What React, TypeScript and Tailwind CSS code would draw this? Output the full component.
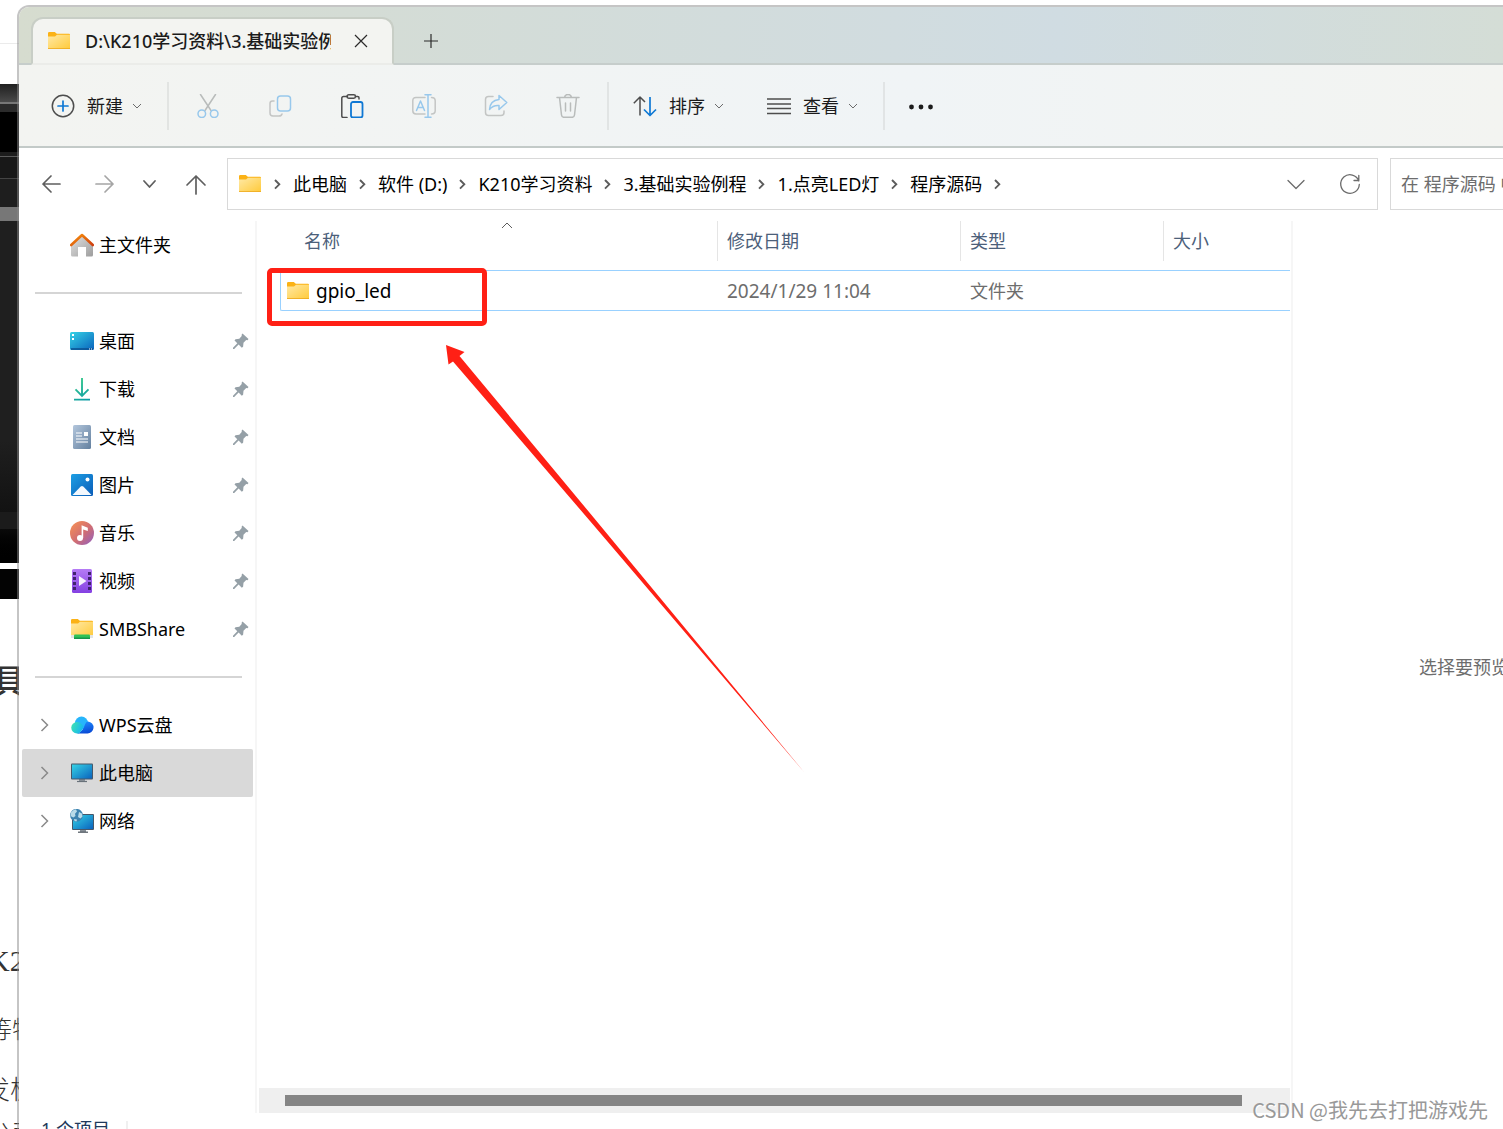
import type { ReactNode } from 'react';

interface IconProps {
  className?: string;
}

function FolderIcon({ className = 'w-6 h-6' }: IconProps) {
  return (
    <svg viewBox="0 0 24 24" className={`${className} shrink-0`}>
      <defs>
        <linearGradient id="folder-front" x1="0" y1="0" x2="1" y2="1">
          <stop offset="0" stopColor="#ffe9a6" />
          <stop offset="1" stopColor="#ffca3a" />
        </linearGradient>
      </defs>
      <path d="M1 4.2q0-1.2 1.200-1.200h5.600l2 1.800H22q1 0 1 1V9H1z" fill="#fbb216" />
      <path d="M1 7.500h7l2-1.700h13V20H1z" fill="url(#folder-front)" />
      <path d="M1 19.200h22v.8H1z" fill="#eda71c" />
    </svg>
  );
}

function HomeIcon() {
  return (
    <svg viewBox="0 0 24 24" className="w-6 h-6 shrink-0">
      <defs>
        <linearGradient id="home-wall" x1="0" y1="0" x2="1" y2="1">
          <stop offset="0" stopColor="#e3e3e3" />
          <stop offset="1" stopColor="#9d9d9d" />
        </linearGradient>
        <linearGradient id="home-roof" x1="0" y1="0" x2="1" y2="1">
          <stop offset="0" stopColor="#f9920b" />
          <stop offset="1" stopColor="#cf3f10" />
        </linearGradient>
      </defs>
      <path d="M1 11 12 2l11 9v11q0 1.500-1.500 1.500H16v-9.500H8v9.500H2.500Q1 23.500 1 22z" fill="url(#home-wall)" />
      <path d="M1.200 12 12 2l10.800 10" fill="none" stroke="url(#home-roof)" strokeWidth="2.600" strokeLinecap="round" strokeLinejoin="round" />
    </svg>
  );
}

function DesktopIcon() {
  return (
    <svg viewBox="0 0 24 24" className="w-6 h-6 shrink-0">
      <defs>
        <linearGradient id="desktop-bg" x1="0" y1="0" x2="1" y2="1">
          <stop offset="0" stopColor="#35d3e6" />
          <stop offset="1" stopColor="#0a63bd" />
        </linearGradient>
      </defs>
      <rect y="3" width="24" height="18" rx="1.500" fill="url(#desktop-bg)" />
      <path d="M1 20h22" stroke="#0b4f8f" strokeWidth="1.500" />
      <path d="M2 5h2v2H2zM2 9h2v2H2z" fill="#fff" />
      <path d="M19 19.500h1v1h-1zM21 19.500h1v1h-1z" fill="#fff" />
    </svg>
  );
}

function DownloadIcon() {
  return (
    <svg viewBox="0 0 24 24" className="w-6 h-6 shrink-0">
      <defs>
        <linearGradient id="download-stroke" gradientUnits="userSpaceOnUse" x1="4" y1="1" x2="18" y2="24">
          <stop offset="0" stopColor="#3fcf8a" />
          <stop offset="1" stopColor="#0a9aa6" />
        </linearGradient>
      </defs>
      <path d="M12 1v17.500M5.500 12.300l6.500 6.500 6.500-6.500M4 22.600h16" fill="none" stroke="url(#download-stroke)" strokeWidth="1.900" />
    </svg>
  );
}

function DocumentIcon() {
  return (
    <svg viewBox="0 0 24 24" className="w-6 h-6 shrink-0">
      <defs>
        <linearGradient id="document-bg" x1="0" y1="0" x2="1" y2="1">
          <stop offset="0" stopColor="#b3c6dc" />
          <stop offset="1" stopColor="#63809f" />
        </linearGradient>
      </defs>
      <rect x="3" width="18" height="24" rx="1.500" fill="url(#document-bg)" />
      <path d="M6 8h6M6 11h6M6 14h12M6 17h12" stroke="#fff" strokeWidth="1.200" />
      <path d="M14 7h4v4h-4z" fill="#fff" />
    </svg>
  );
}

function PictureIcon() {
  return (
    <svg viewBox="0 0 24 24" className="w-6 h-6 shrink-0">
      <defs>
        <linearGradient id="picture-bg" x1="0" y1="0" x2="1" y2="1">
          <stop offset="0" stopColor="#1d9fe4" />
          <stop offset="1" stopColor="#0a5cb8" />
        </linearGradient>
      </defs>
      <rect x="1" y="1" width="22" height="22" rx="1.500" fill="url(#picture-bg)" />
      <path d="m2.500 22 8.200-8.400q1.300-1.200 2.600 0l8.200 8.400z" fill="#f3f8fd" />
      <circle cx="17.500" cy="6.500" r="2" fill="#fff" />
    </svg>
  );
}

function MusicIcon() {
  return (
    <svg viewBox="0 0 24 24" className="w-6 h-6 shrink-0">
      <defs>
        <linearGradient id="music-bg" x1="0" y1="0" x2="1" y2="1">
          <stop offset="0.100" stopColor="#f28c58" />
          <stop offset="0.550" stopColor="#cf6d74" />
          <stop offset="1" stopColor="#8f60c4" />
        </linearGradient>
      </defs>
      <circle cx="12" cy="12" r="12" fill="url(#music-bg)" />
      <circle cx="10" cy="17" r="3" fill="#fff" />
      <path d="M11.600 17V4.200l6.200 2.500v3.400l-4.600-1.700V17z" fill="#fff" />
    </svg>
  );
}

function VideoIcon() {
  return (
    <svg viewBox="0 0 24 24" className="w-6 h-6 shrink-0">
      <defs>
        <linearGradient id="video-bg" x1="0" y1="0" x2="0" y2="1">
          <stop offset="0" stopColor="#b57bf5" />
          <stop offset="1" stopColor="#8440e2" />
        </linearGradient>
      </defs>
      <rect x="2" width="20" height="24" rx="1.500" fill="url(#video-bg)" />
      <path d="M4.500 3v19M19.500 3v19" stroke="#41236e" strokeWidth="3" strokeDasharray="3 2" />
      <path d="m9 7 7.500 5L9 17z" fill="#f5f0fc" />
    </svg>
  );
}

function ShareFolderIcon() {
  return (
    <svg viewBox="0 0 24 24" className="w-6 h-6 shrink-0">
      <path d="M1 3.200Q1 2 2.200 2h5.600l2 1.800H22q1 0 1 1V8H1z" fill="#fbb216" />
      <path d="M1 6.500h7l2-1.700h13V20H1z" fill="url(#folder-front)" />
      <path d="M1 18h22v3H1z" fill="#e2e5e4" />
      <rect x="4" y="17.500" width="16" height="4.500" rx="1" fill="#2fc257" />
      <path d="M4 20.500h16v1.500H4z" fill="#16954a" />
    </svg>
  );
}

function CloudIcon() {
  return (
    <svg viewBox="0 0 24 24" className="w-6 h-6 shrink-0">
      <defs>
        <linearGradient id="cloud-left" x1="0" y1="0.300" x2="1" y2="0.700">
          <stop offset="0" stopColor="#3de0b4" />
          <stop offset="1" stopColor="#12b4f5" />
        </linearGradient>
        <linearGradient id="cloud-right" x1="0.300" y1="0" x2="0.600" y2="1">
          <stop offset="0" stopColor="#1f8dff" />
          <stop offset="1" stopColor="#0848d4" />
        </linearGradient>
      </defs>
      <circle cx="11.500" cy="10" r="6.500" fill="#27b5fb" />
      <path d="M18 8.500a5.800 5.800 0 0 1-1 12H7q6-2 8-9 1-3 3-3z" fill="url(#cloud-right)" />
      <path d="M7 9q3.800 0 6.500 4.500-1.500 5-5 7H7A5.700 5.700 0 0 1 7 9z" fill="url(#cloud-left)" />
    </svg>
  );
}

function ComputerIcon() {
  return (
    <svg viewBox="0 0 24 24" className="w-6 h-6 shrink-0">
      <path d="M9 18h6v2.500H9z" fill="#8a9299" />
      <path d="M7 20.500h10" stroke="#69727a" strokeWidth="1.200" />
      <rect x="1" y="2.500" width="22" height="16" rx="1" fill="#46586a" />
      <path d="M2 3.500h20v14H2z" fill="url(#desktop-bg)" />
    </svg>
  );
}

function NetworkIcon() {
  return (
    <svg viewBox="0 0 24 24" className="w-6 h-6 shrink-0">
      <path d="M10 20h6v3h-6z" fill="#8a9299" />
      <path d="M8 23.200h10" stroke="#4d565e" strokeWidth="1.200" />
      <rect x="2" y="5" width="22" height="16" rx="1" fill="#46586a" />
      <path d="M3 6h20v14H3z" fill="url(#desktop-bg)" />
      <circle cx="6.500" cy="6.300" r="6.400" fill="#3d83b0" />
      <path d="M1 3.500Q3 .5 6 .3l1 2.200-2 2.300.5 2.200-2.200 1.500L.500 7zM9 3l3 1.500.5 3-2 2-2.500-1.500zM4 10l3 .5-.5 2-2-.5z" fill="#b9dbe9" />
    </svg>
  );
}

function PinIcon() {
  return (
    <svg viewBox="0 0 16 16" className="w-4 h-4 shrink-0">
      <path d="M9.500.500 15.500 6l-1 1.200-1.300-.1-2.700 2.600-.4 4-1.300 1-3.200-3.300L1.200 16 0 15.900V14.700l4.300-4.400L1.500 7.400l1-1.200 3.800-.4L8.700 3V1.500z" fill="#95a0a7" />
    </svg>
  );
}

function SmallChevron() {
  return (
    <svg viewBox="0 0 10 10" className="w-2.5 h-2.5" fill="none" stroke="#6b6b6b" strokeWidth="1">
      <path d="m1 3 4 4 4-4" />
    </svg>
  );
}

function LineIcon({ children, className = 'w-6 h-6' }: { children: ReactNode; className?: string }) {
  return (
    <svg viewBox="0 0 24 24" className={className} fill="none" strokeWidth="1.500" strokeLinecap="round" strokeLinejoin="round">
      {children}
    </svg>
  );
}

const fileActions: { label: string; icon: ReactNode }[] = [
  {
    label: '剪切',
    icon: (
      <LineIcon>
        <path d="m4.500.5 10.500 16M19.500.5 9 16.500" stroke="#b9bcbb" />
        <g stroke="#98c8ec">
          <circle cx="5.800" cy="19.800" r="3.800" />
          <circle cx="18.200" cy="19.800" r="3.800" />
        </g>
      </LineIcon>
    ),
  },
  {
    label: '复制',
    icon: (
      <LineIcon>
        <path d="M6 7H4.500Q2 7 2 9.500V19q0 3 3 3h6q2.500 0 3-2" stroke="#c3c5c4" />
        <rect x="9.500" y="2" width="13" height="15" rx="3" stroke="#98c8ec" />
      </LineIcon>
    ),
  },
  {
    label: '粘贴',
    icon: (
      <LineIcon>
        <path d="M7.500 2.500H3.500Q1.800 2.500 1.800 4.200V22q0 1.500 1.500 1.500H7M15.500 2.500h2.200q1.300 0 1.300 1.300V5" stroke="#4d4d4d" />
        <rect x="7" y=".8" width="8.500" height="3.400" rx="1.700" stroke="#4d4d4d" />
        <rect x="11" y="8" width="11.500" height="15.500" rx="2" stroke="#0f78d4" strokeWidth="1.800" />
      </LineIcon>
    ),
  },
  {
    label: '重命名',
    icon: (
      <LineIcon>
        <path d="M13 3.500H4Q.8 3.500.8 6.700v10q0 3.200 3.200 3.200h9M19.500 3.500q3.700 0 3.700 3.200v10q0 3.200-3.700 3.200" stroke="#c3c5c4" />
        <path d="M16 .800v22.400M13 .800h6M13 23.200h6M4.500 16.500l4-9.500 4 9.500M6 13.500h5" stroke="#98c8ec" />
      </LineIcon>
    ),
  },
  {
    label: '共享',
    icon: (
      <LineIcon>
        <path d="M9 2.500H4.500Q1.500 2.500 1.500 5.500v13q0 3 3 3h12.500q3 0 3-3v-1.500" stroke="#c3c5c4" />
        <path d="M15 1.500 22.800 8.500 15 15.500V11.500q-6-.5-9.500 4Q6 6.500 15 5.500z" stroke="#98c8ec" />
      </LineIcon>
    ),
  },
  {
    label: '删除',
    icon: (
      <LineIcon>
        <path d="M1 3.500h22M8.500 3.300q.5-2.800 3.500-2.800t3.500 2.800M3.500 3.500l2 17.500q.3 2.300 2.500 2.300h8q2.200 0 2.500-2.300l2-17.500M9.500 9v8M14.500 9v8" stroke="#b9bcbb" />
      </LineIcon>
    ),
  },
];

const breadcrumbs = ['此电脑', '软件 (D:)', 'K210学习资料', '3.基础实验例程', '1.点亮LED灯', '程序源码'];

const quickAccess = [
  { label: '桌面', icon: <DesktopIcon /> },
  { label: '下载', icon: <DownloadIcon /> },
  { label: '文档', icon: <DocumentIcon /> },
  { label: '图片', icon: <PictureIcon /> },
  { label: '音乐', icon: <MusicIcon /> },
  { label: '视频', icon: <VideoIcon /> },
  { label: 'SMBShare', icon: <ShareFolderIcon /> },
];

const locations = [
  { label: 'WPS云盘', icon: <CloudIcon />, active: false },
  { label: '此电脑', icon: <ComputerIcon />, active: true },
  { label: '网络', icon: <NetworkIcon />, active: false },
];

function BackgroundPage() {
  return (
    <div className="w-[19px] shrink-0 overflow-hidden flex flex-col whitespace-nowrap text-[#333]">
      <div className="h-11 shrink-0 border-b border-[#ebebeb]" />
      <div className="h-10 shrink-0" />
      <div className="h-[18px] shrink-0 bg-linear-to-b from-[#202020] to-[#4a4a4a]" />
      <div className="h-[2px] shrink-0 bg-[#777]" />
      <div className="h-2 shrink-0 bg-[#2b2b2b]" />
      <div className="h-10 shrink-0 bg-black" />
      <div className="h-[5px] shrink-0 bg-[#1c1c1c] border-b border-[#5a5a5a]" />
      <div className="h-[22px] shrink-0 bg-[#181818] border-b border-[#444]" />
      <div className="h-7 shrink-0 bg-[#1e1e1e]" />
      <div className="h-[14px] shrink-0 bg-[#777]" />
      <div className="h-[220px] shrink-0 bg-[#1f1f1f]" />
      <div className="h-[71px] shrink-0 bg-linear-to-b from-[#1f1f1f] to-[#121212]" />
      <div className="h-[17px] shrink-0 bg-[#1b1b1b]" />
      <div className="h-[34px] shrink-0 bg-linear-to-b from-[#0a0a0a] to-black" />
      <div className="h-[6px] shrink-0" />
      <div className="h-[30px] shrink-0 bg-[#030303]" />
      <p className="mt-14 -ml-2 text-[34px] leading-[52px] font-medium">具体</p>
      <p className="mt-[228px] -ml-3 text-[30px] leading-[52px] font-['Liberation_Serif','Noto_Sans_CJK_SC',serif]">K210</p>
      <p className="mt-4 -ml-3 text-[24px] leading-[52px] font-light">等特点</p>
      <p className="mt-2 -ml-4 text-[26px] leading-[52px] font-light">发板</p>
      <p className="-ml-3 text-[24px] leading-[36px] font-light">公司</p>
    </div>
  );
}

function TitleBar() {
  return (
    <div className="h-[58px] shrink-0 flex items-end pl-3 border-b-2 border-[#c6cdcb] bg-linear-to-r from-[#d6dccf] via-[#d0dce2] via-70% to-[#d4ddd6]">
      <div className="w-[363px] h-12 -mb-[2px] pl-[14px] flex items-center rounded-t-xl border-2 border-b-[#ebece9] border-[#c8cec6] bg-[#f3f4f1]">
        <FolderIcon />
        <span className="w-[246px] ml-3.5 overflow-hidden whitespace-nowrap font-medium text-[#1b1b1b]">
          D:\K210学习资料\3.基础实验例程
        </span>
        <button type="button" aria-label="关闭标签页" className="ml-[22px]">
          <svg viewBox="0 0 16 16" className="w-4 h-4" stroke="#2a2a2a" strokeWidth="1.200">
            <path d="m2 2 12 12M14 2 2 14" />
          </svg>
        </button>
      </div>
      <button type="button" aria-label="新建标签页" className="h-11 ml-[29px] flex items-center">
        <svg viewBox="0 0 16 16" className="w-4 h-4" stroke="#2a2a2a" strokeWidth="1.200">
          <path d="M8 1v14M1 8h14" />
        </svg>
      </button>
    </div>
  );
}

function Toolbar() {
  return (
    <div className="h-[83px] shrink-0 flex items-center pl-8 whitespace-nowrap text-[#1b1b1b] border-b-2 border-[#c3cac8] bg-linear-to-r from-[#f3f4f1] via-[#f0f4f6] via-60% to-[#f3f4f1]">
      <button type="button" className="flex items-center">
        <LineIcon>
          <circle cx="12" cy="12" r="10.700" stroke="#4d4d4d" />
          <path d="M12 7v10M7 12h10" stroke="#0f78d4" strokeWidth="1.700" />
        </LineIcon>
        <span className="ml-3 mr-[9px]">新建</span>
        <SmallChevron />
      </button>
      <div className="w-[2px] h-12 ml-[25px] mr-[3px] bg-[#e2e4e2]" />
      {fileActions.map((action) => (
        <button key={action.label} type="button" aria-label={action.label} className="w-[72px] flex justify-center">
          {action.icon}
        </button>
      ))}
      <div className="w-[2px] h-12 ml-[3px] mr-6 bg-[#e1e4e4]" />
      <button type="button" className="flex items-center">
        <LineIcon>
          <path d="M7 21.500V3M.8 9.200 7 3l5 5" stroke="#4d4d4d" strokeLinecap="butt" />
          <path d="M17 3v18M11 15.500l6 6 6-6" stroke="#0f78d4" strokeWidth="1.700" strokeLinecap="butt" />
        </LineIcon>
        <span className="ml-3 mr-[9px]">排序</span>
        <SmallChevron />
      </button>
      <button type="button" className="ml-[43px] flex items-center">
        <LineIcon>
          <path d="M0 5h24M0 10h24M0 14.500h24M0 19.500h24" stroke="#4d4d4d" strokeWidth="1.400" />
        </LineIcon>
        <span className="ml-3 mr-[9px]">查看</span>
        <SmallChevron />
      </button>
      <div className="w-[2px] h-12 ml-[25px] mr-6 bg-[#e1e4e5]" />
      <button type="button" aria-label="查看更多">
        <svg viewBox="0 0 24 24" className="w-6 h-6" fill="#1b1b1b">
          <circle cx="2.500" cy="13" r="2.400" />
          <circle cx="12" cy="13" r="2.400" />
          <circle cx="21.500" cy="13" r="2.400" />
        </svg>
      </button>
    </div>
  );
}

function NavigationBar() {
  return (
    <div className="h-[73px] shrink-0 flex items-start pt-2.5 pl-[7px]">
      <button type="button" aria-label="后退" className="w-[52px] h-[52px] flex items-center justify-center">
        <LineIcon>
          <path d="M20 12H3M11 4 3 12l8 8" stroke="#5f5f5f" strokeWidth="1.700" />
        </LineIcon>
      </button>
      <button type="button" aria-label="前进" className="w-[52px] h-[52px] flex items-center justify-center">
        <LineIcon>
          <path d="M4 12h17M13 4l8 8-8 8" stroke="#a5a5a5" strokeWidth="1.700" />
        </LineIcon>
      </button>
      <button type="button" aria-label="最近的位置" className="w-10 h-[52px] flex items-center justify-center">
        <LineIcon>
          <path d="m6 9 5.500 6L17 9" stroke="#5f5f5f" strokeWidth="1.800" />
        </LineIcon>
      </button>
      <button type="button" aria-label="向上" className="w-[52px] h-[52px] flex items-center justify-center">
        <LineIcon>
          <path d="M12 22V4M3 13l9-9 9 9" stroke="#5f5f5f" strokeWidth="1.700" />
        </LineIcon>
      </button>
      <div className="flex-1 h-[52px] ml-[5px] pl-2.5 pr-[15px] flex items-center border border-[#d9d9d9] whitespace-nowrap">
        <FolderIcon />
        {breadcrumbs.map((crumb) => (
          <div key={crumb} className="flex items-center">
            <BreadcrumbChevron />
            <a href="#">{crumb}</a>
          </div>
        ))}
        <BreadcrumbChevron />
        <button type="button" aria-label="以前的位置" className="ml-auto">
          <LineIcon>
            <path d="m4 8.500 8 8 8-8" stroke="#6b6b6b" strokeWidth="1.300" />
          </LineIcon>
        </button>
        <button type="button" aria-label="刷新" className="ml-[30px]">
          <LineIcon>
            <path d="M20.800 9A9.300 9.300 0 1 0 21.300 12.500M20.800 3.500V8.500H16" stroke="#6b6b6b" strokeWidth="1.300" />
          </LineIcon>
        </button>
      </div>
      <input
        type="text"
        aria-label="搜索"
        placeholder="在 程序源码 中搜索"
        className="w-[113px] h-[52px] ml-3 pl-2.5 shrink-0 border border-r-0 border-[#d9d9d9] placeholder:text-[#6d6d6d] outline-none"
      />
    </div>
  );
}

function BreadcrumbChevron() {
  return (
    <span className="w-[31px] flex justify-center">
      <svg viewBox="0 0 12 12" className="w-3 h-3" fill="none" stroke="#5c5c5c" strokeWidth="1.900">
        <path d="m3 2 4.300 4.300L3 10.600" />
      </svg>
    </span>
  );
}

function SidebarSeparator() {
  return (
    <div className="h-12 pl-4 pr-[13px] flex items-center">
      <div className="w-full h-[2px] bg-[#d5d5d5]" />
    </div>
  );
}

function Sidebar() {
  return (
    <nav className="w-[238px] shrink-0 border-r-2 border-[#f6f6f6]">
      <button type="button" className="h-12 pl-[51px] flex items-center gap-[5px]">
        <HomeIcon />
        主文件夹
      </button>
      <SidebarSeparator />
      {quickAccess.map((item) => (
        <button key={item.label} type="button" className="w-full h-12 pl-[51px] pr-[6px] flex items-center gap-[5px]">
          {item.icon}
          <span className="flex-1 text-left">{item.label}</span>
          <PinIcon />
        </button>
      ))}
      <SidebarSeparator />
      <div className="pl-[3px] pr-[2px]">
        {locations.map((item) => (
          <button
            key={item.label}
            type="button"
            className={`w-full h-12 flex items-center gap-[5px] rounded-xs ${item.active ? 'bg-[#d9d9d9]' : ''}`}
          >
            <span className="w-[43px] flex justify-center">
              <svg viewBox="0 0 14 14" className="w-3.5 h-3.5" fill="none" stroke="#8a8a8a" strokeWidth="1.500">
                <path d="m4.500 1 6 6-6 6" />
              </svg>
            </span>
            {item.icon}
            {item.label}
          </button>
        ))}
      </div>
    </nav>
  );
}

function HeaderCell({ children }: { children: ReactNode }) {
  return (
    <th className="p-0 align-top font-normal text-left">
      <div className="h-10 pl-[9px] flex items-center border-l border-[#e5e5e5]">{children}</div>
    </th>
  );
}

function FileList() {
  return (
    <main className="flex-1 min-w-0 flex flex-col border-r-2 border-[#f6f6f6]">
      <div className="relative flex-1 pl-[23px] pr-px">
        <table className="w-full table-fixed border-separate border-spacing-0">
          <colgroup>
            <col className="w-[437px]" />
            <col className="w-[243px]" />
            <col className="w-[203px]" />
            <col />
          </colgroup>
          <thead className="text-[#4c607a]">
            <tr className="h-[49px]">
              <th className="relative p-0 align-top font-normal text-left">
                <svg viewBox="0 0 12 8" className="absolute left-[221px] top-0 w-3 h-2" fill="none" stroke="#5c5c5c">
                  <path d="m1 7 5-5 5 5" />
                </svg>
                <div className="h-10 pl-6 flex items-center">名称</div>
              </th>
              <HeaderCell>修改日期</HeaderCell>
              <HeaderCell>类型</HeaderCell>
              <HeaderCell>大小</HeaderCell>
            </tr>
          </thead>
          <tbody className="text-[#6d6d6d]">
            <tr className="h-[41px]">
              <td className="p-0 pl-[5px] border border-r-0 border-[#99d1ff] rounded-l-xs text-black">
                <div className="flex items-center gap-[6px] text-[19px]">
                  <FolderIcon />
                  gpio_led
                </div>
              </td>
              <td className="p-0 pl-2.5 border-y border-[#99d1ff] text-[19px]">2024/1/29 11:04</td>
              <td className="p-0 pl-2.5 border-y border-[#99d1ff]">文件夹</td>
              <td className="p-0 border-y border-[#99d1ff]" />
            </tr>
          </tbody>
        </table>

        {/* callout drawn over the list */}
        <div className="absolute left-[10px] top-[47px] w-[220px] h-[58px] rounded-[5px] border-5 border-[#ff2015]" />
        <svg viewBox="0 0 360 430" className="absolute left-[187px] top-[123px] w-[360px] h-[430px] pointer-events-none">
          <path d="M2 1 20.500 8 15.500 12 150 174 360 428 146 177 9 17.500 4.500 20.500z" fill="#ff2015" />
        </svg>
      </div>
      <div role="scrollbar" aria-controls="root" aria-valuenow={0} className="h-[25px] shrink-0 ml-[2px] mr-px pl-[26px] pr-12 flex items-center bg-[#efefef]">
        <div className="w-full h-[11px] bg-[#858585]" />
      </div>
    </main>
  );
}

export default function App() {
  return (
    <div className="relative h-screen flex overflow-hidden bg-white text-black text-[18px] leading-6 font-['Noto_Sans','Noto_Sans_CJK_SC',sans-serif]">
      <BackgroundPage />
      <div className="relative z-10 flex-1 min-w-0 mt-[5px] -ml-[2px] flex flex-col overflow-hidden rounded-tl-xl border-l-2 border-t-2 border-[#8c8c8c]/50 bg-white bg-clip-padding">
        <TitleBar />
        <Toolbar />
        <NavigationBar />
        <div className="flex-1 min-h-0 flex">
          <Sidebar />
          <FileList />
          <aside className="w-[210px] shrink-0 pl-[126px] flex items-center overflow-hidden whitespace-nowrap text-[#6d6d6d]">
            选择要预览的文件。
          </aside>
        </div>
        <footer className="h-4 shrink-0 pl-[22px] flex items-start overflow-hidden text-[#1e395b]">
          <span className="mt-1">1 个项目</span>
          <span className="w-[2px] h-4 ml-4 mt-2 bg-[#f0f0f0]" />
        </footer>
      </div>
      <p className="absolute z-20 right-[15px] bottom-[7px] text-[20px] leading-6 text-[#999] font-['Noto_Sans_CJK_SC',sans-serif] text-shadow-[1px_1px_0_#fff]">
        CSDN @我先去打把游戏先
      </p>
    </div>
  );
}
